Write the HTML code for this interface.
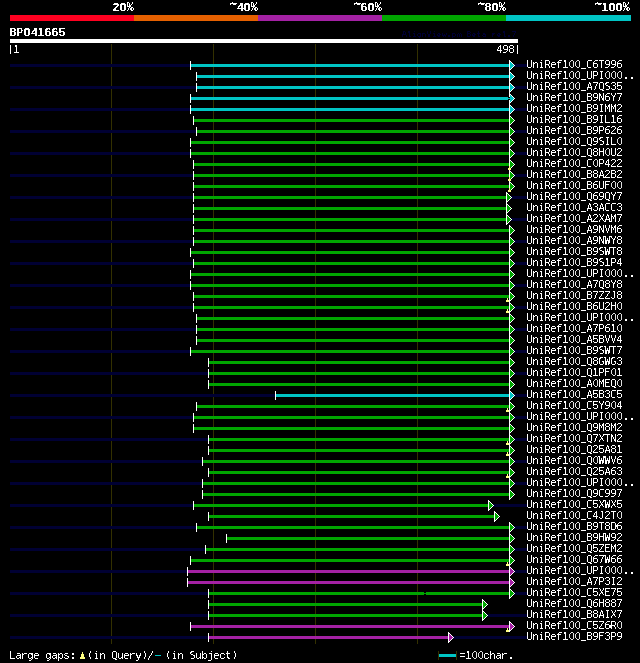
<!DOCTYPE html>
<html lang="en"><head><meta charset="utf-8"><title>BP041665 alignment view</title>
<style>html,body{margin:0;padding:0;background:#000}body{width:640px;height:663px;overflow:hidden}svg{display:block}text{white-space:pre}.fa{font-family:"Liberation Sans","DejaVu Sans",sans-serif;font-size:11.75px;font-weight:bold;fill-opacity:0.66}.fb{font-family:"DejaVu Sans","Liberation Sans",sans-serif;font-size:10.75px;font-weight:bold;fill-opacity:0.46}.fc{font-family:"Liberation Mono","DejaVu Sans Mono",monospace;font-size:12.25px;font-weight:bold;fill-opacity:0.55}.fd{font-family:"DejaVu Sans Mono","Liberation Mono",monospace;font-size:13.25px;font-weight:bold;fill-opacity:0.66}.fe{font-family:"Liberation Sans","DejaVu Sans",sans-serif;font-size:10.5px;font-weight:bold;fill-opacity:0.85}.ff{font-family:"DejaVu Sans","Liberation Sans",sans-serif;font-size:11px;font-weight:bold;fill-opacity:0.55}.fg{font-family:"DejaVu Sans","Liberation Sans",sans-serif;font-size:11px}.fh{font-family:"DejaVu Sans Mono","Liberation Mono",monospace;font-size:11px;font-weight:bold;fill-opacity:0.6}.fi{font-family:"DejaVu Sans Mono","Liberation Mono",monospace;font-size:11.25px;fill-opacity:0.85}.fj{font-family:"DejaVu Sans Mono","Liberation Mono",monospace;font-size:10.75px;fill-opacity:0.75}.fk{font-family:"Liberation Sans","DejaVu Sans",sans-serif;font-size:11.75px}.fl{font-family:"Liberation Mono","DejaVu Sans Mono",monospace;font-size:9.5px;font-weight:bold;fill-opacity:0.55}.fm{font-family:"DejaVu Sans Mono","Liberation Mono",monospace;font-size:7.5px;font-weight:bold;fill-opacity:0.66}.fn{font-family:"DejaVu Sans Mono","Liberation Mono",monospace;font-size:7.5px;font-weight:bold;fill-opacity:0.5}.fo{font-family:"DejaVu Sans Mono","Liberation Mono",monospace;font-size:7.25px;font-weight:bold;fill-opacity:0.5}.fp{font-family:"DejaVu Sans Mono","Liberation Mono",monospace;font-size:7.5px;font-weight:bold;fill-opacity:0.55}.fq{font-family:"DejaVu Sans Mono","Liberation Mono",monospace;font-size:7.5px;fill-opacity:0.85}.fr{font-family:"DejaVu Sans Mono","Liberation Mono",monospace;font-size:7px;font-weight:bold;fill-opacity:0.66}.fs{font-family:"Liberation Mono","DejaVu Sans Mono",monospace;font-size:8px;font-weight:bold;fill-opacity:0.66}.ft{font-family:"DejaVu Sans Mono","Liberation Mono",monospace;font-size:8.25px;font-weight:bold}.fu{font-family:"DejaVu Sans","Liberation Sans",sans-serif;font-size:6.5px;fill-opacity:0.75}.fv{font-family:"Liberation Mono","DejaVu Sans Mono",monospace;font-size:8.25px;font-weight:bold;fill-opacity:0.42}.fw{font-family:"DejaVu Sans Mono","Liberation Mono",monospace;font-size:7.75px;font-weight:bold;fill-opacity:0.66}.fx{font-family:"Liberation Mono","DejaVu Sans Mono",monospace;font-size:7.25px;fill-opacity:0.75}.fy{font-family:"DejaVu Sans Mono","Liberation Mono",monospace;font-size:6.75px;font-weight:bold;fill-opacity:0.75}.fz{font-family:"Liberation Mono","DejaVu Sans Mono",monospace;font-size:8.75px;font-weight:bold;fill-opacity:0.55}.faa{font-family:"DejaVu Sans Mono","Liberation Mono",monospace;font-size:9.5px;fill-opacity:0.55}.fab{font-family:"Liberation Sans","DejaVu Sans",sans-serif;font-size:10px;fill-opacity:0.85}.fac{font-family:"DejaVu Sans Mono","Liberation Mono",monospace;font-size:9.75px;fill-opacity:0.55}.fad{font-family:"DejaVu Sans","Liberation Sans",sans-serif;font-size:10.25px;fill-opacity:0.5}.fae{font-family:"DejaVu Sans Mono","Liberation Mono",monospace;font-size:10.75px;fill-opacity:0.55}.faf{font-family:"DejaVu Sans Mono","Liberation Mono",monospace;font-size:10px;fill-opacity:0.55}.fag{font-family:"Liberation Sans","DejaVu Sans",sans-serif;font-size:11.75px;fill-opacity:0.46}.fah{font-family:"DejaVu Sans Mono","Liberation Mono",monospace;font-size:9.75px;fill-opacity:0.46}.fai{font-family:"Liberation Sans","DejaVu Sans",sans-serif;font-size:10.25px;fill-opacity:0.55}.faj{font-family:"DejaVu Sans Mono","Liberation Mono",monospace;font-size:9.75px;fill-opacity:0.5}.fak{font-family:"Liberation Mono","DejaVu Sans Mono",monospace;font-size:10px;fill-opacity:0.55}.fal{font-family:"DejaVu Sans","Liberation Sans",sans-serif;font-size:10.25px;fill-opacity:0.46;fill:#dfdfdf}.fam{font-family:"DejaVu Sans Mono","Liberation Mono",monospace;font-size:9.5px;fill-opacity:0.75}.fan{font-family:"DejaVu Sans","Liberation Sans",sans-serif;font-size:9.75px;fill-opacity:0.46}.fao{font-family:"DejaVu Sans","Liberation Sans",sans-serif;font-size:11px;fill-opacity:0.46}.fap{font-family:"DejaVu Sans Mono","Liberation Mono",monospace;font-size:11.75px;fill-opacity:0.55}.faq{font-family:"DejaVu Sans Mono","Liberation Mono",monospace;font-size:10.5px;fill-opacity:0.5}.far{font-family:"DejaVu Sans Mono","Liberation Mono",monospace;font-size:11.25px;fill-opacity:0.5}.fas{font-family:"DejaVu Sans Mono","Liberation Mono",monospace;font-size:10.5px;fill-opacity:0.55}.fat{font-family:"Liberation Sans","DejaVu Sans",sans-serif;font-size:10.75px;fill-opacity:0.55}.fau{font-family:"Liberation Sans","DejaVu Sans",sans-serif;font-size:10.75px;fill-opacity:0.66}.fav{font-family:"DejaVu Sans","Liberation Sans",sans-serif;font-size:9.75px;fill-opacity:0.55}.faw{font-family:"DejaVu Sans Mono","Liberation Mono",monospace;font-size:10.5px;fill-opacity:0.46}.fax{font-family:"Liberation Sans","DejaVu Sans",sans-serif;font-size:11.25px;fill-opacity:0.5}.fay{font-family:"DejaVu Sans","Liberation Sans",sans-serif;font-size:10.5px;fill-opacity:0.46}.faz{font-family:"DejaVu Sans Mono","Liberation Mono",monospace;font-size:10px;fill-opacity:0.5}.fba{font-family:"DejaVu Sans Mono","Liberation Mono",monospace;font-size:9.75px;fill-opacity:0.66}.fbb{font-family:"DejaVu Sans Mono","Liberation Mono",monospace;font-size:11px;fill-opacity:0.55}.fbc{font-family:"Liberation Sans","DejaVu Sans",sans-serif;font-size:10px;fill-opacity:0.55}.fbd{font-family:"DejaVu Sans Mono","Liberation Mono",monospace;font-size:10.25px;fill-opacity:0.55}.fbe{font-family:"Liberation Sans","DejaVu Sans",sans-serif;font-size:11px;fill-opacity:0.55}.fbf{font-family:"Liberation Mono","DejaVu Sans Mono",monospace;font-size:11.5px;fill-opacity:0.5}.fbg{font-family:"Liberation Sans","DejaVu Sans",sans-serif;font-size:11px;fill-opacity:0.5}.fbh{font-family:"Liberation Mono","DejaVu Sans Mono",monospace;font-size:11.75px;fill-opacity:0.46}.fbi{font-family:"Liberation Sans","DejaVu Sans",sans-serif;font-size:11.5px;fill-opacity:0.55}.fbj{font-family:"DejaVu Sans Mono","Liberation Mono",monospace;font-size:11.25px}.fbk{font-family:"DejaVu Sans","Liberation Sans",sans-serif;font-size:11px;fill-opacity:0.75}.fbl{font-family:"Liberation Mono","DejaVu Sans Mono",monospace;font-size:12.5px;fill-opacity:0.5}.fbm{font-family:"Liberation Mono","DejaVu Sans Mono",monospace;font-size:10.25px;fill-opacity:0.55}.fbn{font-family:"DejaVu Sans Mono","Liberation Mono",monospace;font-size:10px;fill-opacity:0.85}</style>
</head><body>
<svg width="640" height="663" viewBox="0 0 640 663">
<rect x="0" y="0" width="640" height="663" fill="#000"/>
<defs><g id="arr"><rect x="1" y="-4" width="1" height="1" fill="#fff"/><rect x="1" y="-3" width="1" height="1" fill="currentColor"/><rect x="2" y="-3" width="1" height="1" fill="#fff"/><rect x="1" y="-2" width="2" height="1" fill="currentColor"/><rect x="3" y="-2" width="1" height="1" fill="#fff"/><rect x="1" y="-1" width="3" height="1" fill="currentColor"/><rect x="4" y="-1" width="1" height="1" fill="#fff"/><rect x="1" y="0" width="4" height="1" fill="currentColor"/><rect x="5" y="0" width="1" height="1" fill="#fff"/><rect x="1" y="1" width="3" height="1" fill="currentColor"/><rect x="4" y="1" width="1" height="1" fill="#fff"/><rect x="1" y="2" width="2" height="1" fill="currentColor"/><rect x="3" y="2" width="1" height="1" fill="#fff"/><rect x="1" y="3" width="1" height="1" fill="currentColor"/><rect x="2" y="3" width="1" height="1" fill="#fff"/><rect x="1" y="4" width="1" height="1" fill="#fff"/><rect x="0" y="-5" width="1" height="11" fill="#fff"/></g></defs>
<g shape-rendering="crispEdges">
<rect x="10" y="15" width="124" height="6" fill="#ff0020"/>
<rect x="134" y="15" width="124" height="6" fill="#e56000"/>
<rect x="258" y="15" width="124" height="6" fill="#a421a4"/>
<rect x="382" y="15" width="124" height="6" fill="#00a500"/>
<rect x="506" y="15" width="125" height="6" fill="#00c4c4"/>
<rect x="10" y="39" width="508" height="4" fill="#fff"/>
<rect x="111" y="44" width="1" height="600" fill="#333000"/>
<rect x="213" y="44" width="1" height="600" fill="#333000"/>
<rect x="315" y="44" width="1" height="600" fill="#333000"/>
<rect x="417" y="44" width="1" height="600" fill="#333000"/>
<rect x="10" y="64" width="517" height="3" fill="#000033"/>
<rect x="10" y="86" width="517" height="3" fill="#000033"/>
<rect x="10" y="108" width="517" height="3" fill="#000033"/>
<rect x="10" y="130" width="517" height="3" fill="#000033"/>
<rect x="10" y="152" width="517" height="3" fill="#000033"/>
<rect x="10" y="174" width="517" height="3" fill="#000033"/>
<rect x="10" y="196" width="517" height="3" fill="#000033"/>
<rect x="10" y="218" width="517" height="3" fill="#000033"/>
<rect x="10" y="240" width="517" height="3" fill="#000033"/>
<rect x="10" y="262" width="517" height="3" fill="#000033"/>
<rect x="10" y="284" width="517" height="3" fill="#000033"/>
<rect x="10" y="306" width="517" height="3" fill="#000033"/>
<rect x="10" y="328" width="517" height="3" fill="#000033"/>
<rect x="10" y="350" width="517" height="3" fill="#000033"/>
<rect x="10" y="372" width="517" height="3" fill="#000033"/>
<rect x="10" y="394" width="517" height="3" fill="#000033"/>
<rect x="10" y="416" width="517" height="3" fill="#000033"/>
<rect x="10" y="438" width="517" height="3" fill="#000033"/>
<rect x="10" y="460" width="517" height="3" fill="#000033"/>
<rect x="10" y="482" width="517" height="3" fill="#000033"/>
<rect x="10" y="504" width="517" height="3" fill="#000033"/>
<rect x="10" y="526" width="517" height="3" fill="#000033"/>
<rect x="10" y="548" width="517" height="3" fill="#000033"/>
<rect x="10" y="570" width="517" height="3" fill="#000033"/>
<rect x="10" y="592" width="517" height="3" fill="#000033"/>
<rect x="10" y="614" width="517" height="3" fill="#000033"/>
<rect x="10" y="636" width="517" height="3" fill="#000033"/>
<rect x="191" y="64" width="318" height="3" fill="#00c4c4"/>
<rect x="190" y="61" width="1" height="9" fill="#fff"/>
<rect x="197" y="75" width="312" height="3" fill="#00c4c4"/>
<rect x="196" y="72" width="1" height="9" fill="#fff"/>
<rect x="197" y="86" width="312" height="3" fill="#00c4c4"/>
<rect x="196" y="83" width="1" height="9" fill="#fff"/>
<rect x="191" y="97" width="317" height="3" fill="#00c4c4"/>
<rect x="190" y="94" width="1" height="9" fill="#fff"/>
<rect x="191" y="108" width="318" height="3" fill="#00c4c4"/>
<rect x="190" y="105" width="1" height="9" fill="#fff"/>
<rect x="194" y="119" width="315" height="3" fill="#00a500"/>
<rect x="193" y="116" width="1" height="9" fill="#fff"/>
<rect x="197" y="130" width="312" height="3" fill="#00a500"/>
<rect x="196" y="127" width="1" height="9" fill="#fff"/>
<rect x="191" y="141" width="318" height="3" fill="#00a500"/>
<rect x="190" y="138" width="1" height="9" fill="#fff"/>
<rect x="191" y="152" width="318" height="3" fill="#00a500"/>
<rect x="190" y="149" width="1" height="9" fill="#fff"/>
<rect x="194" y="163" width="315" height="3" fill="#00a500"/>
<rect x="193" y="160" width="1" height="9" fill="#fff"/>
<rect x="194" y="174" width="315" height="3" fill="#00a500"/>
<rect x="193" y="171" width="1" height="9" fill="#fff"/>
<rect x="194" y="185" width="315" height="3" fill="#00a500"/>
<rect x="193" y="182" width="1" height="9" fill="#fff"/>
<rect x="194" y="196" width="312" height="3" fill="#00a500"/>
<rect x="193" y="193" width="1" height="9" fill="#fff"/>
<rect x="194" y="207" width="312" height="3" fill="#00a500"/>
<rect x="193" y="204" width="1" height="9" fill="#fff"/>
<rect x="194" y="218" width="312" height="3" fill="#00a500"/>
<rect x="193" y="215" width="1" height="9" fill="#fff"/>
<rect x="194" y="229" width="315" height="3" fill="#00a500"/>
<rect x="193" y="226" width="1" height="9" fill="#fff"/>
<rect x="194" y="240" width="315" height="3" fill="#00a500"/>
<rect x="193" y="237" width="1" height="9" fill="#fff"/>
<rect x="191" y="251" width="318" height="3" fill="#00a500"/>
<rect x="190" y="248" width="1" height="9" fill="#fff"/>
<rect x="194" y="262" width="315" height="3" fill="#00a500"/>
<rect x="193" y="259" width="1" height="9" fill="#fff"/>
<rect x="191" y="273" width="318" height="3" fill="#00a500"/>
<rect x="190" y="270" width="1" height="9" fill="#fff"/>
<rect x="191" y="284" width="318" height="3" fill="#00a500"/>
<rect x="190" y="281" width="1" height="9" fill="#fff"/>
<rect x="194" y="295" width="315" height="3" fill="#00a500"/>
<rect x="193" y="292" width="1" height="9" fill="#fff"/>
<rect x="194" y="306" width="315" height="3" fill="#00a500"/>
<rect x="193" y="303" width="1" height="9" fill="#fff"/>
<rect x="197" y="317" width="312" height="3" fill="#00a500"/>
<rect x="196" y="314" width="1" height="9" fill="#fff"/>
<rect x="197" y="328" width="312" height="3" fill="#00a500"/>
<rect x="196" y="325" width="1" height="9" fill="#fff"/>
<rect x="197" y="339" width="312" height="3" fill="#00a500"/>
<rect x="196" y="336" width="1" height="9" fill="#fff"/>
<rect x="191" y="350" width="318" height="3" fill="#00a500"/>
<rect x="190" y="347" width="1" height="9" fill="#fff"/>
<rect x="209" y="361" width="300" height="3" fill="#00a500"/>
<rect x="208" y="358" width="1" height="9" fill="#fff"/>
<rect x="209" y="372" width="300" height="3" fill="#00a500"/>
<rect x="208" y="369" width="1" height="9" fill="#fff"/>
<rect x="209" y="383" width="300" height="3" fill="#00a500"/>
<rect x="208" y="380" width="1" height="9" fill="#fff"/>
<rect x="276" y="394" width="233" height="3" fill="#00c4c4"/>
<rect x="275" y="391" width="1" height="9" fill="#fff"/>
<rect x="197" y="405" width="312" height="3" fill="#00a500"/>
<rect x="196" y="402" width="1" height="9" fill="#fff"/>
<rect x="194" y="416" width="315" height="3" fill="#00a500"/>
<rect x="193" y="413" width="1" height="9" fill="#fff"/>
<rect x="194" y="427" width="315" height="3" fill="#00a500"/>
<rect x="193" y="424" width="1" height="9" fill="#fff"/>
<rect x="209" y="438" width="300" height="3" fill="#00a500"/>
<rect x="208" y="435" width="1" height="9" fill="#fff"/>
<rect x="209" y="449" width="300" height="3" fill="#00a500"/>
<rect x="208" y="446" width="1" height="9" fill="#fff"/>
<rect x="203" y="460" width="306" height="3" fill="#00a500"/>
<rect x="202" y="457" width="1" height="9" fill="#fff"/>
<rect x="209" y="471" width="300" height="3" fill="#00a500"/>
<rect x="208" y="468" width="1" height="9" fill="#fff"/>
<rect x="203" y="482" width="306" height="3" fill="#00a500"/>
<rect x="202" y="479" width="1" height="9" fill="#fff"/>
<rect x="203" y="493" width="306" height="3" fill="#00a500"/>
<rect x="202" y="490" width="1" height="9" fill="#fff"/>
<rect x="194" y="504" width="294" height="3" fill="#00a500"/>
<rect x="193" y="501" width="1" height="9" fill="#fff"/>
<rect x="209" y="515" width="285" height="3" fill="#00a500"/>
<rect x="208" y="512" width="1" height="9" fill="#fff"/>
<rect x="197" y="526" width="312" height="3" fill="#00a500"/>
<rect x="196" y="523" width="1" height="9" fill="#fff"/>
<rect x="227" y="537" width="282" height="3" fill="#00a500"/>
<rect x="226" y="534" width="1" height="9" fill="#fff"/>
<rect x="206" y="548" width="303" height="3" fill="#00a500"/>
<rect x="205" y="545" width="1" height="9" fill="#fff"/>
<rect x="191" y="559" width="318" height="3" fill="#00a500"/>
<rect x="190" y="556" width="1" height="9" fill="#fff"/>
<rect x="188" y="570" width="321" height="3" fill="#a421a4"/>
<rect x="187" y="567" width="1" height="9" fill="#fff"/>
<rect x="188" y="581" width="321" height="3" fill="#a421a4"/>
<rect x="187" y="578" width="1" height="9" fill="#fff"/>
<rect x="209" y="592" width="215" height="3" fill="#00a500"/>
<rect x="426" y="592" width="83" height="3" fill="#00a500"/>
<rect x="208" y="589" width="1" height="9" fill="#fff"/>
<rect x="209" y="603" width="273" height="3" fill="#00a500"/>
<rect x="208" y="600" width="1" height="9" fill="#fff"/>
<rect x="209" y="614" width="273" height="3" fill="#00a500"/>
<rect x="208" y="611" width="1" height="9" fill="#fff"/>
<rect x="191" y="625" width="318" height="3" fill="#a421a4"/>
<rect x="190" y="622" width="1" height="9" fill="#fff"/>
<rect x="209" y="636" width="239" height="3" fill="#a421a4"/>
<rect x="208" y="633" width="1" height="9" fill="#fff"/>
<use href="#arr" x="509" y="65" color="#00c4c4"/>
<use href="#arr" x="509" y="76" color="#00c4c4"/>
<use href="#arr" x="509" y="87" color="#00c4c4"/>
<use href="#arr" x="509" y="98" color="#00c4c4"/>
<rect x="508" y="97" width="2" height="3" fill="#000"/>
<rect x="508" y="98" width="2" height="1" fill="#00c4c4"/>
<use href="#arr" x="509" y="109" color="#00c4c4"/>
<use href="#arr" x="509" y="120" color="#00a500"/>
<use href="#arr" x="509" y="131" color="#00a500"/>
<use href="#arr" x="509" y="142" color="#00a500"/>
<use href="#arr" x="509" y="153" color="#00a500"/>
<use href="#arr" x="509" y="164" color="#00a500"/>
<use href="#arr" x="509" y="175" color="#00a500"/>
<use href="#arr" x="509" y="186" color="#00a500"/>
<use href="#arr" x="506" y="197" color="#00a500"/>
<use href="#arr" x="506" y="208" color="#00a500"/>
<use href="#arr" x="506" y="219" color="#00a500"/>
<use href="#arr" x="509" y="230" color="#00a500"/>
<use href="#arr" x="509" y="241" color="#00a500"/>
<use href="#arr" x="509" y="252" color="#00a500"/>
<use href="#arr" x="509" y="263" color="#00a500"/>
<use href="#arr" x="509" y="274" color="#00a500"/>
<use href="#arr" x="509" y="285" color="#00a500"/>
<use href="#arr" x="509" y="296" color="#00a500"/>
<use href="#arr" x="509" y="307" color="#00a500"/>
<use href="#arr" x="509" y="318" color="#00a500"/>
<use href="#arr" x="509" y="329" color="#00a500"/>
<use href="#arr" x="509" y="340" color="#00a500"/>
<use href="#arr" x="509" y="351" color="#00a500"/>
<use href="#arr" x="509" y="362" color="#00a500"/>
<use href="#arr" x="509" y="373" color="#00a500"/>
<use href="#arr" x="509" y="384" color="#00a500"/>
<use href="#arr" x="509" y="395" color="#00c4c4"/>
<use href="#arr" x="509" y="406" color="#00a500"/>
<use href="#arr" x="509" y="417" color="#00a500"/>
<use href="#arr" x="509" y="428" color="#00a500"/>
<use href="#arr" x="509" y="439" color="#00a500"/>
<use href="#arr" x="509" y="450" color="#00a500"/>
<use href="#arr" x="509" y="461" color="#00a500"/>
<use href="#arr" x="509" y="472" color="#00a500"/>
<use href="#arr" x="509" y="483" color="#00a500"/>
<use href="#arr" x="509" y="494" color="#00a500"/>
<use href="#arr" x="488" y="505" color="#00a500"/>
<use href="#arr" x="494" y="516" color="#00a500"/>
<use href="#arr" x="509" y="527" color="#00a500"/>
<use href="#arr" x="509" y="538" color="#00a500"/>
<use href="#arr" x="509" y="549" color="#00a500"/>
<use href="#arr" x="509" y="560" color="#00a500"/>
<use href="#arr" x="509" y="571" color="#a421a4"/>
<use href="#arr" x="509" y="582" color="#a421a4"/>
<use href="#arr" x="509" y="593" color="#00a500"/>
<rect x="424" y="592" width="2" height="3" fill="#000"/>
<rect x="424" y="593" width="2" height="1" fill="#00a500"/>
<use href="#arr" x="482" y="604" color="#00a500"/>
<use href="#arr" x="482" y="615" color="#00a500"/>
<use href="#arr" x="509" y="626" color="#a421a4"/>
<use href="#arr" x="448" y="637" color="#a421a4"/>
<rect x="509" y="166" width="1" height="2" fill="#ffff80"/>
<rect x="508" y="168" width="3" height="2" fill="#ffff80"/>
<rect x="509" y="177" width="1" height="2" fill="#ffff80"/>
<rect x="508" y="179" width="3" height="2" fill="#ffff80"/>
<rect x="509" y="188" width="1" height="2" fill="#ffff80"/>
<rect x="508" y="190" width="3" height="2" fill="#ffff80"/>
<rect x="507" y="298" width="1" height="2" fill="#ffff80"/>
<rect x="506" y="300" width="3" height="2" fill="#ffff80"/>
<rect x="507" y="309" width="1" height="2" fill="#ffff80"/>
<rect x="506" y="311" width="3" height="2" fill="#ffff80"/>
<rect x="507" y="408" width="1" height="2" fill="#ffff80"/>
<rect x="506" y="410" width="3" height="2" fill="#ffff80"/>
<rect x="507" y="441" width="1" height="2" fill="#ffff80"/>
<rect x="506" y="443" width="3" height="2" fill="#ffff80"/>
<rect x="507" y="452" width="1" height="2" fill="#ffff80"/>
<rect x="506" y="454" width="3" height="2" fill="#ffff80"/>
<rect x="507" y="474" width="1" height="2" fill="#ffff80"/>
<rect x="506" y="476" width="3" height="2" fill="#ffff80"/>
<rect x="507" y="562" width="1" height="2" fill="#ffff80"/>
<rect x="506" y="564" width="3" height="2" fill="#ffff80"/>
<rect x="507" y="628" width="1" height="2" fill="#ffff80"/>
<rect x="506" y="630" width="3" height="2" fill="#ffff80"/>
<rect x="438" y="651" width="1" height="9" fill="#333000"/>
<rect x="456" y="651" width="1" height="9" fill="#333000"/>
<rect x="439" y="654" width="17" height="3" fill="#00c4c4"/>
<rect x="155" y="655" width="6" height="1" fill="#00c4c4"/>
<rect x="82" y="652" width="1" height="2" fill="#ffff80"/>
<rect x="81" y="654" width="3" height="3" fill="#ffff80"/>
<rect x="80" y="657" width="5" height="2" fill="#ffff80"/>
</g>
<defs><filter id="tx" filterUnits="userSpaceOnUse" x="0" y="0" width="640" height="663" color-interpolation-filters="sRGB"><feComponentTransfer><feFuncA type="discrete" tableValues="0 0 0 0 0 0 1 1 1 1 1 1 1 1 1 1 1 1 1 1"/></feComponentTransfer></filter></defs>
<g filter="url(#tx)" fill="#fff">
<text><tspan class="fa" x="112.625" y="11">2</tspan><tspan class="fb" x="119.25" y="11">0</tspan><tspan class="fc" x="126.5" y="11">%</tspan></text>
<text><tspan class="fd" x="229.5" y="8">~</tspan><tspan class="fe" x="237.375" y="11">4</tspan><tspan class="fb" x="243.25" y="11">0</tspan><tspan class="fc" x="250.5" y="11">%</tspan></text>
<text><tspan class="fd" x="353.5" y="8">~</tspan><tspan class="ff" x="360" y="11">6</tspan><tspan class="fb" x="367.25" y="11">0</tspan><tspan class="fc" x="374.5" y="11">%</tspan></text>
<text><tspan class="fd" x="477.5" y="8">~</tspan><tspan class="fg" x="484.5" y="11">8</tspan><tspan class="fb" x="491.25" y="11">0</tspan><tspan class="fc" x="498.5" y="11">%</tspan></text>
<text><tspan class="fd" x="594.5" y="8">~</tspan><tspan class="fh" x="601.5" y="11">1</tspan><tspan class="fb" x="608.25 615.25" y="11">00</tspan><tspan class="fc" x="622.5" y="11">%</tspan></text>
<text><tspan class="fi" x="9.5" y="36">B</tspan><tspan class="fj" x="16.5" y="36">P</tspan><tspan class="fb" x="23.25" y="36">0</tspan><tspan class="fe" x="31.375" y="36">4</tspan><tspan class="fh" x="37.5" y="36">1</tspan><tspan class="ff" x="44 51" y="36">66</tspan><tspan class="fk" x="58.625" y="36">5</tspan></text>
<text fill="#000033"><tspan class="fl" x="401.5" y="37">A</tspan><tspan class="fm" x="407.125" y="37">l</tspan><tspan class="fn" x="411.625" y="37">i</tspan><tspan class="fo" x="416.625" y="37">g</tspan><tspan class="fp" x="421.625" y="37">n</tspan><tspan class="fq" x="426.625" y="37">V</tspan><tspan class="fn" x="431.625" y="37">i</tspan><tspan class="fr" x="436.625" y="37">e</tspan><tspan class="fs" x="441.875" y="37">w</tspan><tspan class="ft" x="446.5" y="37">.</tspan><tspan class="fp" x="451.5" y="37">p</tspan><tspan class="fu" x="456.25 462" y="37">m </tspan><tspan class="fv" x="466.5" y="37">B</tspan><tspan class="fr" x="471.625" y="37">e</tspan><tspan class="fw" x="476.5" y="37">t</tspan><tspan class="fx" x="481.875 487" y="37">a </tspan><tspan class="fy" x="491.25" y="37">r</tspan><tspan class="fr" x="496.625" y="37">e</tspan><tspan class="fm" x="502.125" y="37">l</tspan><tspan class="ft" x="506.5" y="37">.</tspan><tspan class="fz" x="511.5" y="37">7</tspan></text>
<text><tspan class="faa" x="7.5" y="52">|</tspan><tspan class="fab" x="13.625" y="53">1</tspan></text>
<text><tspan class="fac" x="496.5" y="53">4</tspan><tspan class="fad" x="502.25" y="53">9</tspan><tspan class="fae" x="508.25" y="53">8</tspan><tspan class="faa" x="514.5" y="52">|</tspan></text>
<text><tspan class="faf" x="526.5" y="68">U</tspan><tspan class="fag" x="532.5" y="68">n</tspan><tspan class="fah" x="538.5" y="68">i</tspan><tspan class="fai" x="543.75" y="68">R</tspan><tspan class="faj" x="550.5" y="68">e</tspan><tspan class="fak" x="556.25" y="68">f</tspan><tspan class="fab" x="562.625" y="68">1</tspan><tspan class="fal" x="568.5 574.5" y="68">00</tspan><tspan class="fam" x="580.5" y="67">_</tspan><tspan class="fan" x="586" y="68">C</tspan><tspan class="fao" x="592" y="68">6</tspan><tspan class="fac" x="598.5" y="68">T</tspan><tspan class="fad" x="604.25 610.25" y="68">99</tspan><tspan class="fao" x="616" y="68">6</tspan></text>
<text><tspan class="faf" x="526.5" y="79">U</tspan><tspan class="fag" x="532.5" y="79">n</tspan><tspan class="fah" x="538.5" y="79">i</tspan><tspan class="fai" x="543.75" y="79">R</tspan><tspan class="faj" x="550.5" y="79">e</tspan><tspan class="fak" x="556.25" y="79">f</tspan><tspan class="fab" x="562.625" y="79">1</tspan><tspan class="fal" x="568.5 574.5" y="79">00</tspan><tspan class="fam" x="580.5" y="78">_</tspan><tspan class="faf" x="586.5" y="79">U</tspan><tspan class="fac" x="592.5" y="79">P</tspan><tspan class="fah" x="598.5" y="79">I</tspan><tspan class="fal" x="604.5 610.5 616.5" y="79">000</tspan><tspan class="fap" x="622.5 628.5" y="79">..</tspan></text>
<text><tspan class="faf" x="526.5" y="90">U</tspan><tspan class="fag" x="532.5" y="90">n</tspan><tspan class="fah" x="538.5" y="90">i</tspan><tspan class="fai" x="543.75" y="90">R</tspan><tspan class="faj" x="550.5" y="90">e</tspan><tspan class="fak" x="556.25" y="90">f</tspan><tspan class="fab" x="562.625" y="90">1</tspan><tspan class="fal" x="568.5 574.5" y="90">00</tspan><tspan class="fam" x="580.5" y="89">_</tspan><tspan class="faq" x="586.5" y="90">A</tspan><tspan class="fae" x="592.25" y="90">7</tspan><tspan class="far" x="598.25" y="90">Q</tspan><tspan class="fas" x="604.5" y="90">S</tspan><tspan class="fat" x="610.5" y="90">3</tspan><tspan class="fau" x="616.5" y="90">5</tspan></text>
<text><tspan class="faf" x="526.5" y="101">U</tspan><tspan class="fag" x="532.5" y="101">n</tspan><tspan class="fah" x="538.5" y="101">i</tspan><tspan class="fai" x="543.75" y="101">R</tspan><tspan class="faj" x="550.5" y="101">e</tspan><tspan class="fak" x="556.25" y="101">f</tspan><tspan class="fab" x="562.625" y="101">1</tspan><tspan class="fal" x="568.5 574.5" y="101">00</tspan><tspan class="fam" x="580.5" y="100">_</tspan><tspan class="faf" x="586.5" y="101">B</tspan><tspan class="fad" x="592.25" y="101">9</tspan><tspan class="fav" x="597.75" y="101">N</tspan><tspan class="fao" x="604" y="101">6</tspan><tspan class="far" x="610.25" y="101">Y</tspan><tspan class="fae" x="616.25" y="101">7</tspan></text>
<text><tspan class="faf" x="526.5" y="112">U</tspan><tspan class="fag" x="532.5" y="112">n</tspan><tspan class="fah" x="538.5" y="112">i</tspan><tspan class="fai" x="543.75" y="112">R</tspan><tspan class="faj" x="550.5" y="112">e</tspan><tspan class="fak" x="556.25" y="112">f</tspan><tspan class="fab" x="562.625" y="112">1</tspan><tspan class="fal" x="568.5 574.5" y="112">00</tspan><tspan class="fam" x="580.5" y="111">_</tspan><tspan class="faf" x="586.5" y="112">B</tspan><tspan class="fad" x="592.25" y="112">9</tspan><tspan class="fah" x="598.5" y="112">I</tspan><tspan class="faw" x="604.25 610.25" y="112">MM</tspan><tspan class="fax" x="616.25" y="112">2</tspan></text>
<text><tspan class="faf" x="526.5" y="123">U</tspan><tspan class="fag" x="532.5" y="123">n</tspan><tspan class="fah" x="538.5" y="123">i</tspan><tspan class="fai" x="543.75" y="123">R</tspan><tspan class="faj" x="550.5" y="123">e</tspan><tspan class="fak" x="556.25" y="123">f</tspan><tspan class="fab" x="562.625" y="123">1</tspan><tspan class="fal" x="568.5 574.5" y="123">00</tspan><tspan class="fam" x="580.5" y="122">_</tspan><tspan class="faf" x="586.5" y="123">B</tspan><tspan class="fad" x="592.25" y="123">9</tspan><tspan class="fah" x="598.5" y="123">I</tspan><tspan class="fac" x="604.25" y="123">L</tspan><tspan class="fab" x="610.625" y="123">1</tspan><tspan class="fao" x="616" y="123">6</tspan></text>
<text><tspan class="faf" x="526.5" y="134">U</tspan><tspan class="fag" x="532.5" y="134">n</tspan><tspan class="fah" x="538.5" y="134">i</tspan><tspan class="fai" x="543.75" y="134">R</tspan><tspan class="faj" x="550.5" y="134">e</tspan><tspan class="fak" x="556.25" y="134">f</tspan><tspan class="fab" x="562.625" y="134">1</tspan><tspan class="fal" x="568.5 574.5" y="134">00</tspan><tspan class="fam" x="580.5" y="133">_</tspan><tspan class="faf" x="586.5" y="134">B</tspan><tspan class="fad" x="592.25" y="134">9</tspan><tspan class="fac" x="598.5" y="134">P</tspan><tspan class="fao" x="604" y="134">6</tspan><tspan class="fax" x="610.25" y="134">2</tspan><tspan class="fao" x="616" y="134">6</tspan></text>
<text><tspan class="faf" x="526.5" y="145">U</tspan><tspan class="fag" x="532.5" y="145">n</tspan><tspan class="fah" x="538.5" y="145">i</tspan><tspan class="fai" x="543.75" y="145">R</tspan><tspan class="faj" x="550.5" y="145">e</tspan><tspan class="fak" x="556.25" y="145">f</tspan><tspan class="fab" x="562.625" y="145">1</tspan><tspan class="fal" x="568.5 574.5" y="145">00</tspan><tspan class="fam" x="580.5" y="144">_</tspan><tspan class="far" x="586.25" y="145">Q</tspan><tspan class="fad" x="592.25" y="145">9</tspan><tspan class="fas" x="598.5" y="145">S</tspan><tspan class="fah" x="604.5" y="145">I</tspan><tspan class="fac" x="610.25" y="145">L</tspan><tspan class="fal" x="616.5" y="145">0</tspan></text>
<text><tspan class="faf" x="526.5" y="156">U</tspan><tspan class="fag" x="532.5" y="156">n</tspan><tspan class="fah" x="538.5" y="156">i</tspan><tspan class="fai" x="543.75" y="156">R</tspan><tspan class="faj" x="550.5" y="156">e</tspan><tspan class="fak" x="556.25" y="156">f</tspan><tspan class="fab" x="562.625" y="156">1</tspan><tspan class="fal" x="568.5 574.5" y="156">00</tspan><tspan class="fam" x="580.5" y="155">_</tspan><tspan class="far" x="586.25" y="156">Q</tspan><tspan class="fae" x="592.25" y="156">8</tspan><tspan class="fac" x="598.5" y="156">H</tspan><tspan class="fal" x="604.5" y="156">0</tspan><tspan class="faf" x="610.5" y="156">U</tspan><tspan class="fax" x="616.25" y="156">2</tspan></text>
<text><tspan class="faf" x="526.5" y="167">U</tspan><tspan class="fag" x="532.5" y="167">n</tspan><tspan class="fah" x="538.5" y="167">i</tspan><tspan class="fai" x="543.75" y="167">R</tspan><tspan class="faj" x="550.5" y="167">e</tspan><tspan class="fak" x="556.25" y="167">f</tspan><tspan class="fab" x="562.625" y="167">1</tspan><tspan class="fal" x="568.5 574.5" y="167">00</tspan><tspan class="fam" x="580.5" y="166">_</tspan><tspan class="fan" x="586" y="167">C</tspan><tspan class="fal" x="592.5" y="167">0</tspan><tspan class="fac" x="598.5 604.5" y="167">P4</tspan><tspan class="fax" x="610.25 616.25" y="167">22</tspan></text>
<text><tspan class="faf" x="526.5" y="178">U</tspan><tspan class="fag" x="532.5" y="178">n</tspan><tspan class="fah" x="538.5" y="178">i</tspan><tspan class="fai" x="543.75" y="178">R</tspan><tspan class="faj" x="550.5" y="178">e</tspan><tspan class="fak" x="556.25" y="178">f</tspan><tspan class="fab" x="562.625" y="178">1</tspan><tspan class="fal" x="568.5 574.5" y="178">00</tspan><tspan class="fam" x="580.5" y="177">_</tspan><tspan class="faf" x="586.5" y="178">B</tspan><tspan class="fae" x="592.25" y="178">8</tspan><tspan class="faq" x="598.5" y="178">A</tspan><tspan class="fax" x="604.25" y="178">2</tspan><tspan class="faf" x="610.5" y="178">B</tspan><tspan class="fax" x="616.25" y="178">2</tspan></text>
<text><tspan class="faf" x="526.5" y="189">U</tspan><tspan class="fag" x="532.5" y="189">n</tspan><tspan class="fah" x="538.5" y="189">i</tspan><tspan class="fai" x="543.75" y="189">R</tspan><tspan class="faj" x="550.5" y="189">e</tspan><tspan class="fak" x="556.25" y="189">f</tspan><tspan class="fab" x="562.625" y="189">1</tspan><tspan class="fal" x="568.5 574.5" y="189">00</tspan><tspan class="fam" x="580.5" y="188">_</tspan><tspan class="faf" x="586.5" y="189">B</tspan><tspan class="fao" x="592" y="189">6</tspan><tspan class="faf" x="598.5" y="189">U</tspan><tspan class="fac" x="604.25" y="189">F</tspan><tspan class="fal" x="610.5 616.5" y="189">00</tspan></text>
<text><tspan class="faf" x="526.5" y="200">U</tspan><tspan class="fag" x="532.5" y="200">n</tspan><tspan class="fah" x="538.5" y="200">i</tspan><tspan class="fai" x="543.75" y="200">R</tspan><tspan class="faj" x="550.5" y="200">e</tspan><tspan class="fak" x="556.25" y="200">f</tspan><tspan class="fab" x="562.625" y="200">1</tspan><tspan class="fal" x="568.5 574.5" y="200">00</tspan><tspan class="fam" x="580.5" y="199">_</tspan><tspan class="far" x="586.25" y="200">Q</tspan><tspan class="fao" x="592" y="200">6</tspan><tspan class="fad" x="598.25" y="200">9</tspan><tspan class="far" x="604.25 610.25" y="200">QY</tspan><tspan class="fae" x="616.25" y="200">7</tspan></text>
<text><tspan class="faf" x="526.5" y="211">U</tspan><tspan class="fag" x="532.5" y="211">n</tspan><tspan class="fah" x="538.5" y="211">i</tspan><tspan class="fai" x="543.75" y="211">R</tspan><tspan class="faj" x="550.5" y="211">e</tspan><tspan class="fak" x="556.25" y="211">f</tspan><tspan class="fab" x="562.625" y="211">1</tspan><tspan class="fal" x="568.5 574.5" y="211">00</tspan><tspan class="fam" x="580.5" y="210">_</tspan><tspan class="faq" x="586.5" y="211">A</tspan><tspan class="fat" x="592.5" y="211">3</tspan><tspan class="faq" x="598.5" y="211">A</tspan><tspan class="fan" x="604 610" y="211">CC</tspan><tspan class="fat" x="616.5" y="211">3</tspan></text>
<text><tspan class="faf" x="526.5" y="222">U</tspan><tspan class="fag" x="532.5" y="222">n</tspan><tspan class="fah" x="538.5" y="222">i</tspan><tspan class="fai" x="543.75" y="222">R</tspan><tspan class="faj" x="550.5" y="222">e</tspan><tspan class="fak" x="556.25" y="222">f</tspan><tspan class="fab" x="562.625" y="222">1</tspan><tspan class="fal" x="568.5 574.5" y="222">00</tspan><tspan class="fam" x="580.5" y="221">_</tspan><tspan class="faq" x="586.5" y="222">A</tspan><tspan class="fax" x="592.25" y="222">2</tspan><tspan class="fay" x="598" y="222">X</tspan><tspan class="faq" x="604.5" y="222">A</tspan><tspan class="faw" x="610.25" y="222">M</tspan><tspan class="fae" x="616.25" y="222">7</tspan></text>
<text><tspan class="faf" x="526.5" y="233">U</tspan><tspan class="fag" x="532.5" y="233">n</tspan><tspan class="fah" x="538.5" y="233">i</tspan><tspan class="fai" x="543.75" y="233">R</tspan><tspan class="faj" x="550.5" y="233">e</tspan><tspan class="fak" x="556.25" y="233">f</tspan><tspan class="fab" x="562.625" y="233">1</tspan><tspan class="fal" x="568.5 574.5" y="233">00</tspan><tspan class="fam" x="580.5" y="232">_</tspan><tspan class="faq" x="586.5" y="233">A</tspan><tspan class="fad" x="592.25" y="233">9</tspan><tspan class="fav" x="597.75" y="233">N</tspan><tspan class="faz" x="604.5" y="233">V</tspan><tspan class="faw" x="610.25" y="233">M</tspan><tspan class="fao" x="616" y="233">6</tspan></text>
<text><tspan class="faf" x="526.5" y="244">U</tspan><tspan class="fag" x="532.5" y="244">n</tspan><tspan class="fah" x="538.5" y="244">i</tspan><tspan class="fai" x="543.75" y="244">R</tspan><tspan class="faj" x="550.5" y="244">e</tspan><tspan class="fak" x="556.25" y="244">f</tspan><tspan class="fab" x="562.625" y="244">1</tspan><tspan class="fal" x="568.5 574.5" y="244">00</tspan><tspan class="fam" x="580.5" y="243">_</tspan><tspan class="faq" x="586.5" y="244">A</tspan><tspan class="fad" x="592.25" y="244">9</tspan><tspan class="fav" x="597.75" y="244">N</tspan><tspan class="fba" x="604.5" y="244">W</tspan><tspan class="far" x="610.25" y="244">Y</tspan><tspan class="fae" x="616.25" y="244">8</tspan></text>
<text><tspan class="faf" x="526.5" y="255">U</tspan><tspan class="fag" x="532.5" y="255">n</tspan><tspan class="fah" x="538.5" y="255">i</tspan><tspan class="fai" x="543.75" y="255">R</tspan><tspan class="faj" x="550.5" y="255">e</tspan><tspan class="fak" x="556.25" y="255">f</tspan><tspan class="fab" x="562.625" y="255">1</tspan><tspan class="fal" x="568.5 574.5" y="255">00</tspan><tspan class="fam" x="580.5" y="254">_</tspan><tspan class="faf" x="586.5" y="255">B</tspan><tspan class="fad" x="592.25" y="255">9</tspan><tspan class="fas" x="598.5" y="255">S</tspan><tspan class="fba" x="604.5" y="255">W</tspan><tspan class="fac" x="610.5" y="255">T</tspan><tspan class="fae" x="616.25" y="255">8</tspan></text>
<text><tspan class="faf" x="526.5" y="266">U</tspan><tspan class="fag" x="532.5" y="266">n</tspan><tspan class="fah" x="538.5" y="266">i</tspan><tspan class="fai" x="543.75" y="266">R</tspan><tspan class="faj" x="550.5" y="266">e</tspan><tspan class="fak" x="556.25" y="266">f</tspan><tspan class="fab" x="562.625" y="266">1</tspan><tspan class="fal" x="568.5 574.5" y="266">00</tspan><tspan class="fam" x="580.5" y="265">_</tspan><tspan class="faf" x="586.5" y="266">B</tspan><tspan class="fad" x="592.25" y="266">9</tspan><tspan class="fas" x="598.5" y="266">S</tspan><tspan class="fab" x="604.625" y="266">1</tspan><tspan class="fac" x="610.5 616.5" y="266">P4</tspan></text>
<text><tspan class="faf" x="526.5" y="277">U</tspan><tspan class="fag" x="532.5" y="277">n</tspan><tspan class="fah" x="538.5" y="277">i</tspan><tspan class="fai" x="543.75" y="277">R</tspan><tspan class="faj" x="550.5" y="277">e</tspan><tspan class="fak" x="556.25" y="277">f</tspan><tspan class="fab" x="562.625" y="277">1</tspan><tspan class="fal" x="568.5 574.5" y="277">00</tspan><tspan class="fam" x="580.5" y="276">_</tspan><tspan class="faf" x="586.5" y="277">U</tspan><tspan class="fac" x="592.5" y="277">P</tspan><tspan class="fah" x="598.5" y="277">I</tspan><tspan class="fal" x="604.5 610.5 616.5" y="277">000</tspan><tspan class="fap" x="622.5 628.5" y="277">..</tspan></text>
<text><tspan class="faf" x="526.5" y="288">U</tspan><tspan class="fag" x="532.5" y="288">n</tspan><tspan class="fah" x="538.5" y="288">i</tspan><tspan class="fai" x="543.75" y="288">R</tspan><tspan class="faj" x="550.5" y="288">e</tspan><tspan class="fak" x="556.25" y="288">f</tspan><tspan class="fab" x="562.625" y="288">1</tspan><tspan class="fal" x="568.5 574.5" y="288">00</tspan><tspan class="fam" x="580.5" y="287">_</tspan><tspan class="faq" x="586.5" y="288">A</tspan><tspan class="fae" x="592.25" y="288">7</tspan><tspan class="far" x="598.25" y="288">Q</tspan><tspan class="fae" x="604.25" y="288">8</tspan><tspan class="far" x="610.25" y="288">Y</tspan><tspan class="fae" x="616.25" y="288">8</tspan></text>
<text><tspan class="faf" x="526.5" y="299">U</tspan><tspan class="fag" x="532.5" y="299">n</tspan><tspan class="fah" x="538.5" y="299">i</tspan><tspan class="fai" x="543.75" y="299">R</tspan><tspan class="faj" x="550.5" y="299">e</tspan><tspan class="fak" x="556.25" y="299">f</tspan><tspan class="fab" x="562.625" y="299">1</tspan><tspan class="fal" x="568.5 574.5" y="299">00</tspan><tspan class="fam" x="580.5" y="298">_</tspan><tspan class="faf" x="586.5" y="299">B</tspan><tspan class="fae" x="592.25" y="299">7</tspan><tspan class="fbb" x="598 604" y="299">ZZ</tspan><tspan class="fbc" x="610.5" y="299">J</tspan><tspan class="fae" x="616.25" y="299">8</tspan></text>
<text><tspan class="faf" x="526.5" y="310">U</tspan><tspan class="fag" x="532.5" y="310">n</tspan><tspan class="fah" x="538.5" y="310">i</tspan><tspan class="fai" x="543.75" y="310">R</tspan><tspan class="faj" x="550.5" y="310">e</tspan><tspan class="fak" x="556.25" y="310">f</tspan><tspan class="fab" x="562.625" y="310">1</tspan><tspan class="fal" x="568.5 574.5" y="310">00</tspan><tspan class="fam" x="580.5" y="309">_</tspan><tspan class="faf" x="586.5" y="310">B</tspan><tspan class="fao" x="592" y="310">6</tspan><tspan class="faf" x="598.5" y="310">U</tspan><tspan class="fax" x="604.25" y="310">2</tspan><tspan class="fac" x="610.5" y="310">H</tspan><tspan class="fal" x="616.5" y="310">0</tspan></text>
<text><tspan class="faf" x="526.5" y="321">U</tspan><tspan class="fag" x="532.5" y="321">n</tspan><tspan class="fah" x="538.5" y="321">i</tspan><tspan class="fai" x="543.75" y="321">R</tspan><tspan class="faj" x="550.5" y="321">e</tspan><tspan class="fak" x="556.25" y="321">f</tspan><tspan class="fab" x="562.625" y="321">1</tspan><tspan class="fal" x="568.5 574.5" y="321">00</tspan><tspan class="fam" x="580.5" y="320">_</tspan><tspan class="faf" x="586.5" y="321">U</tspan><tspan class="fac" x="592.5" y="321">P</tspan><tspan class="fah" x="598.5" y="321">I</tspan><tspan class="fal" x="604.5 610.5 616.5" y="321">000</tspan><tspan class="fap" x="622.5 628.5" y="321">..</tspan></text>
<text><tspan class="faf" x="526.5" y="332">U</tspan><tspan class="fag" x="532.5" y="332">n</tspan><tspan class="fah" x="538.5" y="332">i</tspan><tspan class="fai" x="543.75" y="332">R</tspan><tspan class="faj" x="550.5" y="332">e</tspan><tspan class="fak" x="556.25" y="332">f</tspan><tspan class="fab" x="562.625" y="332">1</tspan><tspan class="fal" x="568.5 574.5" y="332">00</tspan><tspan class="fam" x="580.5" y="331">_</tspan><tspan class="faq" x="586.5" y="332">A</tspan><tspan class="fae" x="592.25" y="332">7</tspan><tspan class="fac" x="598.5" y="332">P</tspan><tspan class="fao" x="604" y="332">6</tspan><tspan class="fab" x="610.625" y="332">1</tspan><tspan class="fal" x="616.5" y="332">0</tspan></text>
<text><tspan class="faf" x="526.5" y="343">U</tspan><tspan class="fag" x="532.5" y="343">n</tspan><tspan class="fah" x="538.5" y="343">i</tspan><tspan class="fai" x="543.75" y="343">R</tspan><tspan class="faj" x="550.5" y="343">e</tspan><tspan class="fak" x="556.25" y="343">f</tspan><tspan class="fab" x="562.625" y="343">1</tspan><tspan class="fal" x="568.5 574.5" y="343">00</tspan><tspan class="fam" x="580.5" y="342">_</tspan><tspan class="faq" x="586.5" y="343">A</tspan><tspan class="fau" x="592.5" y="343">5</tspan><tspan class="faf" x="598.5" y="343">B</tspan><tspan class="faz" x="604.5 610.5" y="343">VV</tspan><tspan class="fac" x="616.5" y="343">4</tspan></text>
<text><tspan class="faf" x="526.5" y="354">U</tspan><tspan class="fag" x="532.5" y="354">n</tspan><tspan class="fah" x="538.5" y="354">i</tspan><tspan class="fai" x="543.75" y="354">R</tspan><tspan class="faj" x="550.5" y="354">e</tspan><tspan class="fak" x="556.25" y="354">f</tspan><tspan class="fab" x="562.625" y="354">1</tspan><tspan class="fal" x="568.5 574.5" y="354">00</tspan><tspan class="fam" x="580.5" y="353">_</tspan><tspan class="faf" x="586.5" y="354">B</tspan><tspan class="fad" x="592.25" y="354">9</tspan><tspan class="fas" x="598.5" y="354">S</tspan><tspan class="fba" x="604.5" y="354">W</tspan><tspan class="fac" x="610.5" y="354">T</tspan><tspan class="fae" x="616.25" y="354">7</tspan></text>
<text><tspan class="faf" x="526.5" y="365">U</tspan><tspan class="fag" x="532.5" y="365">n</tspan><tspan class="fah" x="538.5" y="365">i</tspan><tspan class="fai" x="543.75" y="365">R</tspan><tspan class="faj" x="550.5" y="365">e</tspan><tspan class="fak" x="556.25" y="365">f</tspan><tspan class="fab" x="562.625" y="365">1</tspan><tspan class="fal" x="568.5 574.5" y="365">00</tspan><tspan class="fam" x="580.5" y="364">_</tspan><tspan class="far" x="586.25" y="365">Q</tspan><tspan class="fae" x="592.25" y="365">8</tspan><tspan class="fbd" x="598.25" y="365">G</tspan><tspan class="fba" x="604.5" y="365">W</tspan><tspan class="fbd" x="610.25" y="365">G</tspan><tspan class="fat" x="616.5" y="365">3</tspan></text>
<text><tspan class="faf" x="526.5" y="376">U</tspan><tspan class="fag" x="532.5" y="376">n</tspan><tspan class="fah" x="538.5" y="376">i</tspan><tspan class="fai" x="543.75" y="376">R</tspan><tspan class="faj" x="550.5" y="376">e</tspan><tspan class="fak" x="556.25" y="376">f</tspan><tspan class="fab" x="562.625" y="376">1</tspan><tspan class="fal" x="568.5 574.5" y="376">00</tspan><tspan class="fam" x="580.5" y="375">_</tspan><tspan class="far" x="586.25" y="376">Q</tspan><tspan class="fab" x="592.625" y="376">1</tspan><tspan class="fac" x="598.5 604.25" y="376">PF</tspan><tspan class="fal" x="610.5" y="376">0</tspan><tspan class="fab" x="616.625" y="376">1</tspan></text>
<text><tspan class="faf" x="526.5" y="387">U</tspan><tspan class="fag" x="532.5" y="387">n</tspan><tspan class="fah" x="538.5" y="387">i</tspan><tspan class="fai" x="543.75" y="387">R</tspan><tspan class="faj" x="550.5" y="387">e</tspan><tspan class="fak" x="556.25" y="387">f</tspan><tspan class="fab" x="562.625" y="387">1</tspan><tspan class="fal" x="568.5 574.5" y="387">00</tspan><tspan class="fam" x="580.5" y="386">_</tspan><tspan class="faq" x="586.5" y="387">A</tspan><tspan class="fal" x="592.5" y="387">0</tspan><tspan class="faw" x="598.25" y="387">M</tspan><tspan class="faf" x="604.25" y="387">E</tspan><tspan class="far" x="610.25" y="387">Q</tspan><tspan class="fal" x="616.5" y="387">0</tspan></text>
<text><tspan class="faf" x="526.5" y="398">U</tspan><tspan class="fag" x="532.5" y="398">n</tspan><tspan class="fah" x="538.5" y="398">i</tspan><tspan class="fai" x="543.75" y="398">R</tspan><tspan class="faj" x="550.5" y="398">e</tspan><tspan class="fak" x="556.25" y="398">f</tspan><tspan class="fab" x="562.625" y="398">1</tspan><tspan class="fal" x="568.5 574.5" y="398">00</tspan><tspan class="fam" x="580.5" y="397">_</tspan><tspan class="faq" x="586.5" y="398">A</tspan><tspan class="fau" x="592.5" y="398">5</tspan><tspan class="faf" x="598.5" y="398">B</tspan><tspan class="fat" x="604.5" y="398">3</tspan><tspan class="fan" x="610" y="398">C</tspan><tspan class="fau" x="616.5" y="398">5</tspan></text>
<text><tspan class="faf" x="526.5" y="409">U</tspan><tspan class="fag" x="532.5" y="409">n</tspan><tspan class="fah" x="538.5" y="409">i</tspan><tspan class="fai" x="543.75" y="409">R</tspan><tspan class="faj" x="550.5" y="409">e</tspan><tspan class="fak" x="556.25" y="409">f</tspan><tspan class="fab" x="562.625" y="409">1</tspan><tspan class="fal" x="568.5 574.5" y="409">00</tspan><tspan class="fam" x="580.5" y="408">_</tspan><tspan class="fan" x="586" y="409">C</tspan><tspan class="fau" x="592.5" y="409">5</tspan><tspan class="far" x="598.25" y="409">Y</tspan><tspan class="fad" x="604.25" y="409">9</tspan><tspan class="fal" x="610.5" y="409">0</tspan><tspan class="fac" x="616.5" y="409">4</tspan></text>
<text><tspan class="faf" x="526.5" y="420">U</tspan><tspan class="fag" x="532.5" y="420">n</tspan><tspan class="fah" x="538.5" y="420">i</tspan><tspan class="fai" x="543.75" y="420">R</tspan><tspan class="faj" x="550.5" y="420">e</tspan><tspan class="fak" x="556.25" y="420">f</tspan><tspan class="fab" x="562.625" y="420">1</tspan><tspan class="fal" x="568.5 574.5" y="420">00</tspan><tspan class="fam" x="580.5" y="419">_</tspan><tspan class="faf" x="586.5" y="420">U</tspan><tspan class="fac" x="592.5" y="420">P</tspan><tspan class="fah" x="598.5" y="420">I</tspan><tspan class="fal" x="604.5 610.5 616.5" y="420">000</tspan><tspan class="fap" x="622.5 628.5" y="420">..</tspan></text>
<text><tspan class="faf" x="526.5" y="431">U</tspan><tspan class="fag" x="532.5" y="431">n</tspan><tspan class="fah" x="538.5" y="431">i</tspan><tspan class="fai" x="543.75" y="431">R</tspan><tspan class="faj" x="550.5" y="431">e</tspan><tspan class="fak" x="556.25" y="431">f</tspan><tspan class="fab" x="562.625" y="431">1</tspan><tspan class="fal" x="568.5 574.5" y="431">00</tspan><tspan class="fam" x="580.5" y="430">_</tspan><tspan class="far" x="586.25" y="431">Q</tspan><tspan class="fad" x="592.25" y="431">9</tspan><tspan class="faw" x="598.25" y="431">M</tspan><tspan class="fae" x="604.25" y="431">8</tspan><tspan class="faw" x="610.25" y="431">M</tspan><tspan class="fax" x="616.25" y="431">2</tspan></text>
<text><tspan class="faf" x="526.5" y="442">U</tspan><tspan class="fag" x="532.5" y="442">n</tspan><tspan class="fah" x="538.5" y="442">i</tspan><tspan class="fai" x="543.75" y="442">R</tspan><tspan class="faj" x="550.5" y="442">e</tspan><tspan class="fak" x="556.25" y="442">f</tspan><tspan class="fab" x="562.625" y="442">1</tspan><tspan class="fal" x="568.5 574.5" y="442">00</tspan><tspan class="fam" x="580.5" y="441">_</tspan><tspan class="far" x="586.25" y="442">Q</tspan><tspan class="fae" x="592.25" y="442">7</tspan><tspan class="fay" x="598" y="442">X</tspan><tspan class="fac" x="604.5" y="442">T</tspan><tspan class="fav" x="609.75" y="442">N</tspan><tspan class="fax" x="616.25" y="442">2</tspan></text>
<text><tspan class="faf" x="526.5" y="453">U</tspan><tspan class="fag" x="532.5" y="453">n</tspan><tspan class="fah" x="538.5" y="453">i</tspan><tspan class="fai" x="543.75" y="453">R</tspan><tspan class="faj" x="550.5" y="453">e</tspan><tspan class="fak" x="556.25" y="453">f</tspan><tspan class="fab" x="562.625" y="453">1</tspan><tspan class="fal" x="568.5 574.5" y="453">00</tspan><tspan class="fam" x="580.5" y="452">_</tspan><tspan class="far" x="586.25" y="453">Q</tspan><tspan class="fax" x="592.25" y="453">2</tspan><tspan class="fau" x="598.5" y="453">5</tspan><tspan class="faq" x="604.5" y="453">A</tspan><tspan class="fae" x="610.25" y="453">8</tspan><tspan class="fab" x="616.625" y="453">1</tspan></text>
<text><tspan class="faf" x="526.5" y="464">U</tspan><tspan class="fag" x="532.5" y="464">n</tspan><tspan class="fah" x="538.5" y="464">i</tspan><tspan class="fai" x="543.75" y="464">R</tspan><tspan class="faj" x="550.5" y="464">e</tspan><tspan class="fak" x="556.25" y="464">f</tspan><tspan class="fab" x="562.625" y="464">1</tspan><tspan class="fal" x="568.5 574.5" y="464">00</tspan><tspan class="fam" x="580.5" y="463">_</tspan><tspan class="far" x="586.25" y="464">Q</tspan><tspan class="fal" x="592.5" y="464">0</tspan><tspan class="fba" x="598.5 604.5" y="464">WW</tspan><tspan class="faz" x="610.5" y="464">V</tspan><tspan class="fao" x="616" y="464">6</tspan></text>
<text><tspan class="faf" x="526.5" y="475">U</tspan><tspan class="fag" x="532.5" y="475">n</tspan><tspan class="fah" x="538.5" y="475">i</tspan><tspan class="fai" x="543.75" y="475">R</tspan><tspan class="faj" x="550.5" y="475">e</tspan><tspan class="fak" x="556.25" y="475">f</tspan><tspan class="fab" x="562.625" y="475">1</tspan><tspan class="fal" x="568.5 574.5" y="475">00</tspan><tspan class="fam" x="580.5" y="474">_</tspan><tspan class="far" x="586.25" y="475">Q</tspan><tspan class="fax" x="592.25" y="475">2</tspan><tspan class="fau" x="598.5" y="475">5</tspan><tspan class="faq" x="604.5" y="475">A</tspan><tspan class="fao" x="610" y="475">6</tspan><tspan class="fat" x="616.5" y="475">3</tspan></text>
<text><tspan class="faf" x="526.5" y="486">U</tspan><tspan class="fag" x="532.5" y="486">n</tspan><tspan class="fah" x="538.5" y="486">i</tspan><tspan class="fai" x="543.75" y="486">R</tspan><tspan class="faj" x="550.5" y="486">e</tspan><tspan class="fak" x="556.25" y="486">f</tspan><tspan class="fab" x="562.625" y="486">1</tspan><tspan class="fal" x="568.5 574.5" y="486">00</tspan><tspan class="fam" x="580.5" y="485">_</tspan><tspan class="faf" x="586.5" y="486">U</tspan><tspan class="fac" x="592.5" y="486">P</tspan><tspan class="fah" x="598.5" y="486">I</tspan><tspan class="fal" x="604.5 610.5 616.5" y="486">000</tspan><tspan class="fap" x="622.5 628.5" y="486">..</tspan></text>
<text><tspan class="faf" x="526.5" y="497">U</tspan><tspan class="fag" x="532.5" y="497">n</tspan><tspan class="fah" x="538.5" y="497">i</tspan><tspan class="fai" x="543.75" y="497">R</tspan><tspan class="faj" x="550.5" y="497">e</tspan><tspan class="fak" x="556.25" y="497">f</tspan><tspan class="fab" x="562.625" y="497">1</tspan><tspan class="fal" x="568.5 574.5" y="497">00</tspan><tspan class="fam" x="580.5" y="496">_</tspan><tspan class="far" x="586.25" y="497">Q</tspan><tspan class="fad" x="592.25" y="497">9</tspan><tspan class="fan" x="598" y="497">C</tspan><tspan class="fad" x="604.25 610.25" y="497">99</tspan><tspan class="fae" x="616.25" y="497">7</tspan></text>
<text><tspan class="faf" x="526.5" y="508">U</tspan><tspan class="fag" x="532.5" y="508">n</tspan><tspan class="fah" x="538.5" y="508">i</tspan><tspan class="fai" x="543.75" y="508">R</tspan><tspan class="faj" x="550.5" y="508">e</tspan><tspan class="fak" x="556.25" y="508">f</tspan><tspan class="fab" x="562.625" y="508">1</tspan><tspan class="fal" x="568.5 574.5" y="508">00</tspan><tspan class="fam" x="580.5" y="507">_</tspan><tspan class="fan" x="586" y="508">C</tspan><tspan class="fau" x="592.5" y="508">5</tspan><tspan class="fay" x="598" y="508">X</tspan><tspan class="fba" x="604.5" y="508">W</tspan><tspan class="fay" x="610" y="508">X</tspan><tspan class="fau" x="616.5" y="508">5</tspan></text>
<text><tspan class="faf" x="526.5" y="519">U</tspan><tspan class="fag" x="532.5" y="519">n</tspan><tspan class="fah" x="538.5" y="519">i</tspan><tspan class="fai" x="543.75" y="519">R</tspan><tspan class="faj" x="550.5" y="519">e</tspan><tspan class="fak" x="556.25" y="519">f</tspan><tspan class="fab" x="562.625" y="519">1</tspan><tspan class="fal" x="568.5 574.5" y="519">00</tspan><tspan class="fam" x="580.5" y="518">_</tspan><tspan class="fan" x="586" y="519">C</tspan><tspan class="fac" x="592.5" y="519">4</tspan><tspan class="fbc" x="598.5" y="519">J</tspan><tspan class="fax" x="604.25" y="519">2</tspan><tspan class="fac" x="610.5" y="519">T</tspan><tspan class="fal" x="616.5" y="519">0</tspan></text>
<text><tspan class="faf" x="526.5" y="530">U</tspan><tspan class="fag" x="532.5" y="530">n</tspan><tspan class="fah" x="538.5" y="530">i</tspan><tspan class="fai" x="543.75" y="530">R</tspan><tspan class="faj" x="550.5" y="530">e</tspan><tspan class="fak" x="556.25" y="530">f</tspan><tspan class="fab" x="562.625" y="530">1</tspan><tspan class="fal" x="568.5 574.5" y="530">00</tspan><tspan class="fam" x="580.5" y="529">_</tspan><tspan class="faf" x="586.5" y="530">B</tspan><tspan class="fad" x="592.25" y="530">9</tspan><tspan class="fac" x="598.5" y="530">T</tspan><tspan class="fae" x="604.25" y="530">8</tspan><tspan class="fbb" x="610.5" y="530">D</tspan><tspan class="fao" x="616" y="530">6</tspan></text>
<text><tspan class="faf" x="526.5" y="541">U</tspan><tspan class="fag" x="532.5" y="541">n</tspan><tspan class="fah" x="538.5" y="541">i</tspan><tspan class="fai" x="543.75" y="541">R</tspan><tspan class="faj" x="550.5" y="541">e</tspan><tspan class="fak" x="556.25" y="541">f</tspan><tspan class="fab" x="562.625" y="541">1</tspan><tspan class="fal" x="568.5 574.5" y="541">00</tspan><tspan class="fam" x="580.5" y="540">_</tspan><tspan class="faf" x="586.5" y="541">B</tspan><tspan class="fad" x="592.25" y="541">9</tspan><tspan class="fac" x="598.5" y="541">H</tspan><tspan class="fba" x="604.5" y="541">W</tspan><tspan class="fad" x="610.25" y="541">9</tspan><tspan class="fax" x="616.25" y="541">2</tspan></text>
<text><tspan class="faf" x="526.5" y="552">U</tspan><tspan class="fag" x="532.5" y="552">n</tspan><tspan class="fah" x="538.5" y="552">i</tspan><tspan class="fai" x="543.75" y="552">R</tspan><tspan class="faj" x="550.5" y="552">e</tspan><tspan class="fak" x="556.25" y="552">f</tspan><tspan class="fab" x="562.625" y="552">1</tspan><tspan class="fal" x="568.5 574.5" y="552">00</tspan><tspan class="fam" x="580.5" y="551">_</tspan><tspan class="far" x="586.25" y="552">Q</tspan><tspan class="fau" x="592.5" y="552">5</tspan><tspan class="fbb" x="598" y="552">Z</tspan><tspan class="faf" x="604.25" y="552">E</tspan><tspan class="faw" x="610.25" y="552">M</tspan><tspan class="fax" x="616.25" y="552">2</tspan></text>
<text><tspan class="faf" x="526.5" y="563">U</tspan><tspan class="fag" x="532.5" y="563">n</tspan><tspan class="fah" x="538.5" y="563">i</tspan><tspan class="fai" x="543.75" y="563">R</tspan><tspan class="faj" x="550.5" y="563">e</tspan><tspan class="fak" x="556.25" y="563">f</tspan><tspan class="fab" x="562.625" y="563">1</tspan><tspan class="fal" x="568.5 574.5" y="563">00</tspan><tspan class="fam" x="580.5" y="562">_</tspan><tspan class="far" x="586.25" y="563">Q</tspan><tspan class="fao" x="592" y="563">6</tspan><tspan class="fae" x="598.25" y="563">7</tspan><tspan class="fba" x="604.5" y="563">W</tspan><tspan class="fao" x="610 616" y="563">66</tspan></text>
<text><tspan class="faf" x="526.5" y="574">U</tspan><tspan class="fag" x="532.5" y="574">n</tspan><tspan class="fah" x="538.5" y="574">i</tspan><tspan class="fai" x="543.75" y="574">R</tspan><tspan class="faj" x="550.5" y="574">e</tspan><tspan class="fak" x="556.25" y="574">f</tspan><tspan class="fab" x="562.625" y="574">1</tspan><tspan class="fal" x="568.5 574.5" y="574">00</tspan><tspan class="fam" x="580.5" y="573">_</tspan><tspan class="faf" x="586.5" y="574">U</tspan><tspan class="fac" x="592.5" y="574">P</tspan><tspan class="fah" x="598.5" y="574">I</tspan><tspan class="fal" x="604.5 610.5 616.5" y="574">000</tspan><tspan class="fap" x="622.5 628.5" y="574">..</tspan></text>
<text><tspan class="faf" x="526.5" y="585">U</tspan><tspan class="fag" x="532.5" y="585">n</tspan><tspan class="fah" x="538.5" y="585">i</tspan><tspan class="fai" x="543.75" y="585">R</tspan><tspan class="faj" x="550.5" y="585">e</tspan><tspan class="fak" x="556.25" y="585">f</tspan><tspan class="fab" x="562.625" y="585">1</tspan><tspan class="fal" x="568.5 574.5" y="585">00</tspan><tspan class="fam" x="580.5" y="584">_</tspan><tspan class="faq" x="586.5" y="585">A</tspan><tspan class="fae" x="592.25" y="585">7</tspan><tspan class="fac" x="598.5" y="585">P</tspan><tspan class="fat" x="604.5" y="585">3</tspan><tspan class="fah" x="610.5" y="585">I</tspan><tspan class="fax" x="616.25" y="585">2</tspan></text>
<text><tspan class="faf" x="526.5" y="596">U</tspan><tspan class="fag" x="532.5" y="596">n</tspan><tspan class="fah" x="538.5" y="596">i</tspan><tspan class="fai" x="543.75" y="596">R</tspan><tspan class="faj" x="550.5" y="596">e</tspan><tspan class="fak" x="556.25" y="596">f</tspan><tspan class="fab" x="562.625" y="596">1</tspan><tspan class="fal" x="568.5 574.5" y="596">00</tspan><tspan class="fam" x="580.5" y="595">_</tspan><tspan class="fan" x="586" y="596">C</tspan><tspan class="fau" x="592.5" y="596">5</tspan><tspan class="fay" x="598" y="596">X</tspan><tspan class="faf" x="604.25" y="596">E</tspan><tspan class="fae" x="610.25" y="596">7</tspan><tspan class="fau" x="616.5" y="596">5</tspan></text>
<text><tspan class="faf" x="526.5" y="607">U</tspan><tspan class="fag" x="532.5" y="607">n</tspan><tspan class="fah" x="538.5" y="607">i</tspan><tspan class="fai" x="543.75" y="607">R</tspan><tspan class="faj" x="550.5" y="607">e</tspan><tspan class="fak" x="556.25" y="607">f</tspan><tspan class="fab" x="562.625" y="607">1</tspan><tspan class="fal" x="568.5 574.5" y="607">00</tspan><tspan class="fam" x="580.5" y="606">_</tspan><tspan class="far" x="586.25" y="607">Q</tspan><tspan class="fao" x="592" y="607">6</tspan><tspan class="fac" x="598.5" y="607">H</tspan><tspan class="fae" x="604.25 610.25 616.25" y="607">887</tspan></text>
<text><tspan class="faf" x="526.5" y="618">U</tspan><tspan class="fag" x="532.5" y="618">n</tspan><tspan class="fah" x="538.5" y="618">i</tspan><tspan class="fai" x="543.75" y="618">R</tspan><tspan class="faj" x="550.5" y="618">e</tspan><tspan class="fak" x="556.25" y="618">f</tspan><tspan class="fab" x="562.625" y="618">1</tspan><tspan class="fal" x="568.5 574.5" y="618">00</tspan><tspan class="fam" x="580.5" y="617">_</tspan><tspan class="faf" x="586.5" y="618">B</tspan><tspan class="fae" x="592.25" y="618">8</tspan><tspan class="faq" x="598.5" y="618">A</tspan><tspan class="fah" x="604.5" y="618">I</tspan><tspan class="fay" x="610" y="618">X</tspan><tspan class="fae" x="616.25" y="618">7</tspan></text>
<text><tspan class="faf" x="526.5" y="629">U</tspan><tspan class="fag" x="532.5" y="629">n</tspan><tspan class="fah" x="538.5" y="629">i</tspan><tspan class="fai" x="543.75" y="629">R</tspan><tspan class="faj" x="550.5" y="629">e</tspan><tspan class="fak" x="556.25" y="629">f</tspan><tspan class="fab" x="562.625" y="629">1</tspan><tspan class="fal" x="568.5 574.5" y="629">00</tspan><tspan class="fam" x="580.5" y="628">_</tspan><tspan class="fan" x="586" y="629">C</tspan><tspan class="fau" x="592.5" y="629">5</tspan><tspan class="fbb" x="598" y="629">Z</tspan><tspan class="fao" x="604" y="629">6</tspan><tspan class="fai" x="609.75" y="629">R</tspan><tspan class="fal" x="616.5" y="629">0</tspan></text>
<text><tspan class="faf" x="526.5" y="640">U</tspan><tspan class="fag" x="532.5" y="640">n</tspan><tspan class="fah" x="538.5" y="640">i</tspan><tspan class="fai" x="543.75" y="640">R</tspan><tspan class="faj" x="550.5" y="640">e</tspan><tspan class="fak" x="556.25" y="640">f</tspan><tspan class="fab" x="562.625" y="640">1</tspan><tspan class="fal" x="568.5 574.5" y="640">00</tspan><tspan class="fam" x="580.5" y="639">_</tspan><tspan class="faf" x="586.5" y="640">B</tspan><tspan class="fad" x="592.25" y="640">9</tspan><tspan class="fac" x="598.25" y="640">F</tspan><tspan class="fat" x="604.5" y="640">3</tspan><tspan class="fac" x="610.5" y="640">P</tspan><tspan class="fad" x="616.25" y="640">9</tspan></text>
<text><tspan class="fac" x="9.25" y="659">L</tspan><tspan class="fbe" x="15.5" y="659">a</tspan><tspan class="fbf" x="20.75" y="659">r</tspan><tspan class="fbg" x="27.25" y="659">g</tspan><tspan class="faj" x="33.5 40" y="659">e </tspan><tspan class="fbg" x="45.25" y="659">g</tspan><tspan class="fbe" x="51.5" y="659">a</tspan><tspan class="fbh" x="57.25" y="659">p</tspan><tspan class="fbi" x="63.625" y="659">s</tspan><tspan class="fbj" x="69.5" y="659">:</tspan></text>
<text><tspan class="faa" x="87.25" y="658">(</tspan><tspan class="fah" x="93.5" y="659">i</tspan><tspan class="fag" x="99.5 106" y="659">n </tspan><tspan class="far" x="111.25" y="659">Q</tspan><tspan class="fax" x="117.25" y="659">u</tspan><tspan class="faj" x="123.5" y="659">e</tspan><tspan class="fbf" x="128.75" y="659">r</tspan><tspan class="fbk" x="135.25" y="659">y</tspan><tspan class="faa" x="141.875" y="658">)</tspan><tspan class="fbl" x="146.75" y="660">/</tspan></text>
<text><tspan class="faa" x="165.25" y="658">(</tspan><tspan class="fah" x="171.5" y="659">i</tspan><tspan class="fag" x="177.5 184" y="659">n </tspan><tspan class="fas" x="189.5" y="659">S</tspan><tspan class="fax" x="195.25" y="659">u</tspan><tspan class="fbf" x="201.25" y="659">b</tspan><tspan class="fbm" x="207.5" y="659">j</tspan><tspan class="faj" x="213.5" y="659">e</tspan><tspan class="fbm" x="219.5" y="659">c</tspan><tspan class="fbn" x="225.25" y="659">t</tspan><tspan class="faa" x="231.875" y="658">)</tspan></text>
<text><tspan class="fak" x="459.5" y="659">=</tspan><tspan class="fab" x="465.625" y="659">1</tspan><tspan class="fal" x="471.5 477.5" y="659">00</tspan><tspan class="fbm" x="483.5" y="659">c</tspan><tspan class="fag" x="489.5" y="659">h</tspan><tspan class="fbe" x="495.5" y="659">a</tspan><tspan class="fbf" x="500.75" y="659">r</tspan><tspan class="fap" x="507.5" y="659">.</tspan></text>
</g>
</svg>
</body></html>
